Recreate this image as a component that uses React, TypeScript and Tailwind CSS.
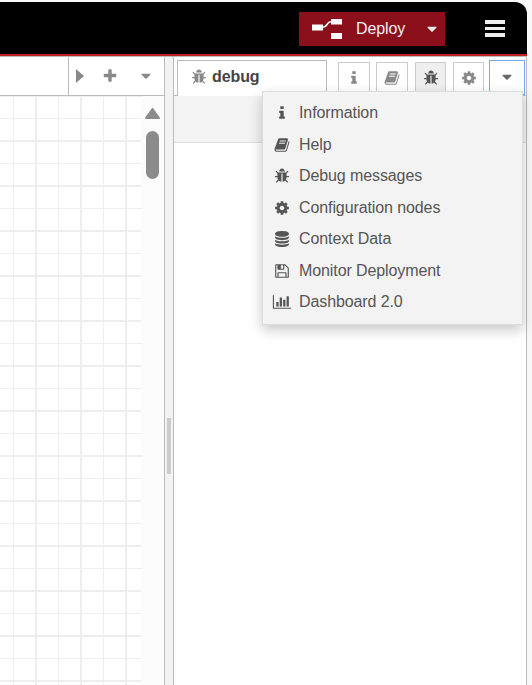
import React from "react";

const icons = {
  info: "M1216 1344v128q0 26-19 45t-45 19h-512q-26 0-45-19t-19-45v-128q0-26 19-45t45-19h64v-384h-64q-26 0-45-19t-19-45v-128q0-26 19-45t45-19h384q26 0 45 19t19 45v576h64q26 0 45 19t19 45zm-128-1152v192q0 26-19 45t-45 19h-256q-26 0-45-19t-19-45v-192q0-26 19-45t45-19h256q26 0 45 19t19 45z",
  bug: "M1696 960q0 26-19 45t-45 19h-224q0 171-67 290l208 209q19 19 19 45t-19 45q-18 19-45 19t-45-19l-198-197q-5 5-15 13t-42 28.5-65 36.5-82 29-97 13v-896h-128v896q-51 0-101.5-13.5t-87-33-66-39-43.5-32.5l-15-14-183 207q-20 21-48 21-24 0-43-16-19-18-20.5-44.5t15.5-46.5l202-227q-58-114-58-274h-224q-26 0-45-19t-19-45 19-45 45-19h224v-294l-173-173q-19-19-19-45t19-45 45-19 45 19l173 173h844l173-173q19-19 45-19t45 19 19 45-19 45l-173 173v294h224q26 0 45 19t19 45zm-480-576h-640q0-133 93.5-226.5t226.5-93.5 226.5 93.5 93.5 226.5z",
  book: "M1703 478q40 57 18 129l-275 906q-19 64-76.5 107.5t-122.5 43.5h-923q-77 0-148.5-53.5t-99.5-131.5q-24-67-2-127 0-4 3-27t4-37q1-8-3-21.5t-3-19.5q2-11 8-21t16.5-23.5 16.5-23.5q23-38 45-91.5t30-91.5q3-10 .5-30t-.5-28q3-11 17-28t17-23q21-36 42-92t25-90q1-9-2.5-32t.5-28q4-13 22-30.5t22-22.5q19-26 42.5-84.5t27.5-96.5q1-8-3-25.5t-2-26.5q2-8 9-18t18-23 17-21q8-12 16.5-30.5t15-35 16-36 19.5-32 26.5-23.5 36-11.5 47.5 5.5l-1 3q38-9 51-9h761q74 0 114 56t18 130l-274 906q-36 119-71.5 153.5t-128.5 34.5h-869q-27 0-38 15-11 16-1 43 24 70 144 70h923q29 0 56-15.5t35-41.5l300-987q7-22 5-57 38 15 59 43zm-1064 2q-4 13 2 22.5t20 9.5h608q13 0 25.5-9.5t16.5-22.5l21-64q4-13-2-22.5t-20-9.5h-608q-13 0-25.5 9.5t-16.5 22.5zm-83 256q-4 13 2 22.5t20 9.5h608q13 0 25.5-9.5t16.5-22.5l21-64q4-13-2-22.5t-20-9.5h-608q-13 0-25.5 9.5t-16.5 22.5z",
  cog: "M1152 896q0-106-75-181t-181-75-181 75-75 181 75 181 181 75 181-75 75-181zm512-109v222q0 12-8 23t-20 13l-185 28q-19 54-39 91 35 50 107 138 10 12 10 25t-9 23q-27 37-99 108t-94 71q-12 0-26-9l-138-108q-44 23-91 38-16 136-29 186-7 28-36 28h-222q-14 0-24.5-8.5t-11.5-21.5l-28-184q-49-16-90-37l-141 107q-10 9-25 9-14 0-25-11-126-114-165-168-7-10-7-23 0-12 8-23 15-21 51-66.5t54-70.5q-27-50-41-99l-183-27q-13-2-21-12.5t-8-23.5v-222q0-12 8-23t19-13l186-28q14-46 39-92-40-57-107-138-10-12-10-24 0-10 9-23 26-36 98.5-107.5t94.5-71.5q13 0 26 10l138 107q44-23 91-38 16-136 29-186 7-28 36-28h222q14 0 24.5 8.5t11.5 21.5l28 184q49 16 90 37l142-107q9-9 24-9 13 0 25 10 129 119 165 170 7 8 7 22 0 12-8 23-15 21-51 66.5t-54 70.5q26 50 41 98l183 28q13 2 21 12.5t8 23.5z",
  database: "M896 768q237 0 443-43t325-127v170q0 69-103 128t-280 93.5-385 34.5-385-34.5-280-93.5-103-128v-170q119 84 325 127t443 43zm0 768q237 0 443-43t325-127v170q0 69-103 128t-280 93.5-385 34.5-385-34.5-280-93.5-103-128v-170q119 84 325 127t443 43zm0-384q237 0 443-43t325-127v170q0 69-103 128t-280 93.5-385 34.5-385-34.5-280-93.5-103-128v-170q119 84 325 127t443 43zm0-1152q208 0 385 34.5t280 93.5 103 128v128q0 69-103 128t-280 93.5-385 34.5-385-34.5-280-93.5-103-128v-128q0-69 103-128t280-93.5 385-34.5z",
  save: "M512 1536h768v-384h-768v384zm896 0h128v-896q0-14-10-38.5t-20-34.5l-281-281q-10-10-34-20t-39-10v416q0 40-28 68t-68 28h-576q-40 0-68-28t-28-68v-416h-128v1280h128v-416q0-40 28-68t68-28h832q40 0 68 28t28 68v416zm-384-928v-320q0-13-9.5-22.5t-22.5-9.5h-192q-13 0-22.5 9.5t-9.5 22.5v320q0 13 9.5 22.5t22.5 9.5h192q13 0 22.5-9.5t9.5-22.5zm640 32v928q0 40-28 68t-68 28h-1344q-40 0-68-28t-28-68v-1344q0-40 28-68t68-28h928q40 0 88 20t76 48l280 280q28 28 48 76t20 88z",
  chart: "M512 896v512h-256v-512h256zm384-512v1024h-256v-1024h256zm1024 1152v128h-2048v-1536h128v1408h1920zm-640-896v768h-256v-768h256zm384-384v1152h-256v-1152h256z",
  caret: "M1408 704q0 26-19 45l-448 448q-19 19-45 19t-45-19l-448-448q-19-19-19-45t19-45 45-19h896q26 0 45 19t19 45z",
  plus: "M1600 736v192q0 40-28 68t-68 28h-416v416q0 40-28 68t-68 28h-192q-40 0-68-28t-28-68v-416h-416q-40 0-68-28t-28-68v-192q0-40 28-68t68-28h416v-416q0-40 28-68t68-28h192q40 0 68 28t28 68v416h416q40 0 68 28t28 68z",
};

type IconName = keyof typeof icons;

function Icon({ name, className = "" }: { name: IconName; className?: string }) {
  return (
    <svg viewBox="0 0 1792 1792" fill="currentColor" className={`h-4 w-4 shrink-0 overflow-visible ${className}`}>
      <path d={icons[name]} />
    </svg>
  );
}

const menuItems: { icon: IconName; label: string }[] = [
  { icon: "info", label: "Information" },
  { icon: "book", label: "Help" },
  { icon: "bug", label: "Debug messages" },
  { icon: "cog", label: "Configuration nodes" },
  { icon: "database", label: "Context Data" },
  { icon: "save", label: "Monitor Deployment" },
  { icon: "chart", label: "Dashboard 2.0" },
];

function Header() {
  return (
    <header className="flex h-[54px] w-[527px] shrink-0 items-start justify-end rounded-tr-[12px] border-b-2 border-[#c02020] bg-black pt-2.5 pr-[22px]">
      <button className="flex h-[34px] w-[146px] items-center bg-[#8c101c] pl-[13px] text-[#eee]">
        <svg viewBox="0 0 30 20" className="h-5 w-[30px]">
          <path d="M11 8.2C16 8.2 14 2.8 19 2.8" fill="none" stroke="#fff" strokeWidth="1.6" />
          <path d="M0 5.5h11v6H0zM19 0h11v5.500H19zM19 14h11v6H19z" fill="#fff" />
        </svg>
        <span className="ml-3.5 text-base tracking-[-0.1px]">Deploy</span>
        <Icon name="caret" className="ml-[19px]" />
      </button>
      <button className="mt-2 ml-10 flex w-5 flex-col gap-[3px]">
        <span className="h-[3.5px] bg-[#eee]" />
        <span className="h-[3.5px] bg-[#eee]" />
        <span className="h-[3.5px] bg-[#eee]" />
      </button>
    </header>
  );
}

function Workspace() {
  return (
    <section className="flex w-[165px] shrink-0 flex-col border-t border-r border-[#bbb] bg-white">
      <div className="flex h-[39px] shrink-0 justify-end border-b border-[#bbb] text-[#888]">
        <div className="flex w-24 items-center border-l border-[#bbb] pl-[7px]">
          <svg viewBox="0 0 8 14" className="h-3.5 w-2" fill="currentColor">
            <path d="M0 0L8 7L0 14z" />
          </svg>
          <Icon name="plus" className="ml-[18px]" />
          <Icon name="caret" className="ml-5" />
        </div>
      </div>
      <div className="flex flex-1">
        <div className="w-[141px] bg-[linear-gradient(to_right,transparent_13px,#eee_13px,#eee_14px,transparent_14px,transparent_35px,#eee_35px,#eee_37px,transparent_37px),linear-gradient(to_bottom,#eee_1px,transparent_1px,transparent_22px,#eee_22px,#eee_23px,transparent_23px,transparent_44px,#eee_44px)] bg-[size:45px_45px]" />
        <div className="flex w-[23px] flex-col items-center bg-[#fcfcfc] pt-3">
          <svg viewBox="0 0 15 11" className="h-[11px] w-[15px]">
            <path d="M7.500 1L14 10H1z" fill="#8b8b8b" stroke="#8b8b8b" strokeWidth="2" strokeLinejoin="round" />
          </svg>
          <div className="mt-3 h-12 w-[13px] rounded-full bg-[#8b8b8b]" />
        </div>
      </div>
    </section>
  );
}

const tabButton = "flex h-[33px] items-center justify-center border border-b-0 border-[#ccc] pb-[3px]";

function Sidebar() {
  return (
    <section className="relative flex w-[354px] shrink-0 flex-col border-x border-t border-[#bbb] bg-white">
      <div className="flex h-[39px] shrink-0 items-end">
        <div className="h-full w-[3px] border-b border-[#bbb]" />
        <div className="flex h-[36px] w-[150px] items-center border border-b-0 border-[#bbb] pb-1 pl-[13px]">
          <Icon name="bug" className="text-[#888]" />
          <span className="ml-[5px] text-base font-bold tracking-[-0.1px] text-[#444]">debug</span>
        </div>
        <div className="flex h-full flex-1 items-end border-b border-[#bbb] pl-[11px] text-[#888]">
          <button className={`${tabButton} w-8`}><Icon name="info" /></button>
          <button className={`${tabButton} ml-1.5 w-8`}><Icon name="book" /></button>
          <button className={`${tabButton} ml-[7px] w-[31px] bg-[#eee] text-[#555]`}><Icon name="bug" /></button>
          <button className={`${tabButton} ml-[7px] w-[31px]`}><Icon name="cog" /></button>
          <button className="ml-[5px] flex h-[35px] w-9 items-center justify-center border border-[#79a8e8] pb-[1px] text-[#666]">
            <Icon name="caret" />
          </button>
        </div>
      </div>
      <div className="h-[47px] shrink-0 border-b border-[#ddd] bg-[#f3f3f3]" />
      <div className="flex-1" />
      <ul className="absolute top-[34px] left-[88px] h-[234px] w-[261px] border border-[#ddd] bg-[#f3f3f3] pt-[5.25px] text-base tracking-[-0.1px] text-[#555] shadow-[0_5px_12px_rgba(0,0,0,0.22)]">
        {menuItems.map((item) => (
          <li key={item.label} className="flex h-[31.5px] items-center pl-[11px]">
            <Icon name={item.icon} />
            <span className="ml-[9px]">{item.label}</span>
          </li>
        ))}
      </ul>
    </section>
  );
}

export default function App() {
  return (
    <div className="flex h-[685px] w-[532px] flex-col overflow-hidden bg-[#f8f8f8] pt-0.5 font-['Liberation_Sans',Arial,sans-serif]">
      <Header />
      <main className="flex w-[527px] flex-1">
        <Workspace />
        <div className="flex w-2 shrink-0 items-start justify-center border-t border-[#bbb] bg-[#f3f3f3]">
          <div className="mt-[361px] h-14 w-1 bg-[#ccc]" />
        </div>
        <Sidebar />
      </main>
    </div>
  );
}
